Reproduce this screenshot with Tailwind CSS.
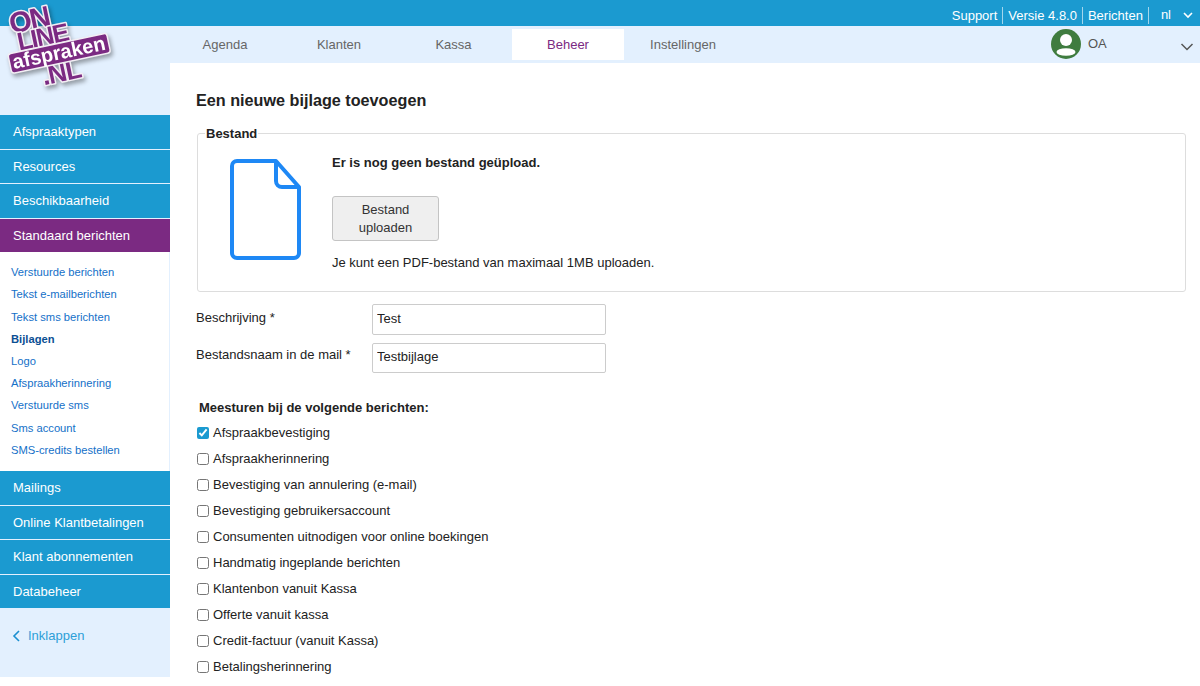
<!DOCTYPE html>
<html lang="en">
<head>
  <meta charset="UTF-8" />
  <title>Een nieuwe bijlage toevoegen</title>
  <script src="https://cdn.jsdelivr.net/npm/@tailwindcss/browser@4"></script>
</head>
<body class="bg-white font-['Liberation_Sans',Arial,sans-serif] text-[13px] text-[#222]">
  <div class="h-[677px] w-[1200px] overflow-hidden relative flex flex-col">
    <!-- top bar -->
    <div class="h-[26px] pt-[4px] bg-[#1b9ad0] flex items-center justify-end text-white text-[13px] shrink-0">
      <a class="pr-[5px] border-r border-white/60 leading-[17px]">Support</a>
      <a class="px-[5px] border-r border-white/60 leading-[17px]">Versie 4.8.0</a>
      <a class="px-[5px] border-r border-white/60 leading-[17px]">Berichten</a>
      <a class="pl-[12px] pr-[11px]">nl</a>
      <svg class="w-[12px] h-[12px] mr-[6px]" viewBox="0 0 12 12" fill="none" stroke="white" stroke-width="1.6"><path d="M2 4l4 4 4-4"/></svg>
    </div>

    <div class="flex flex-1 min-h-0">
      <!-- sidebar -->
      <div class="w-[170px] bg-[#e3f0fe] shrink-0 pt-[89px] flex flex-col">
        <div class="flex flex-col gap-px text-white text-[13px]">
          <a class="h-[34px] bg-[#1b9ad0] pl-[13px] flex items-center">Afspraaktypen</a>
          <a class="h-[33px] bg-[#1b9ad0] pl-[13px] flex items-center">Resources</a>
          <a class="h-[34px] bg-[#1b9ad0] pl-[13px] flex items-center">Beschikbaarheid</a>
          <a class="h-[33px] bg-[#7b2a82] pl-[13px] flex items-center">Standaard berichten</a>
        </div>
        <div class="bg-white pt-[9.500px] pb-[9.700px] pl-[11px] text-[11.2px] text-[#1470c8] flex flex-col border-r border-[#e3f0fe]">
          <a class="h-[22.2px] flex items-center">Verstuurde berichten</a>
          <a class="h-[22.2px] flex items-center">Tekst e-mailberichten</a>
          <a class="h-[22.2px] flex items-center">Tekst sms berichten</a>
          <a class="h-[22.2px] flex items-center font-bold text-[#0b4f94]">Bijlagen</a>
          <a class="h-[22.2px] flex items-center">Logo</a>
          <a class="h-[22.2px] flex items-center">Afspraakherinnering</a>
          <a class="h-[22.2px] flex items-center">Verstuurde sms</a>
          <a class="h-[22.2px] flex items-center">Sms account</a>
          <a class="h-[22.2px] flex items-center">SMS-credits bestellen</a>
        </div>
        <div class="flex flex-col gap-px text-white text-[13px]">
          <a class="h-[34px] bg-[#1b9ad0] pl-[13px] flex items-center">Mailings</a>
          <a class="h-[33px] bg-[#1b9ad0] pl-[13px] flex items-center">Online Klantbetalingen</a>
          <a class="h-[34px] bg-[#1b9ad0] pl-[13px] flex items-center">Klant abonnementen</a>
          <a class="h-[33px] bg-[#1b9ad0] pl-[13px] flex items-center">Databeheer</a>
        </div>
        <a class="mt-[18px] pl-[12px] flex items-center gap-[7px] text-[13px] text-[#2d9fd8]">
          <svg class="w-[9px] h-[12px]" viewBox="0 0 9 12" fill="none" stroke="#1b8fd0" stroke-width="1.6"><path d="M7 1L2 6l5 5"/></svg>
          Inklappen
        </a>
      </div>

      <!-- main -->
      <div class="flex-1 min-w-0 flex flex-col">
        <nav class="h-[37px] bg-[#e3f0fe] flex items-center text-[13px] text-[#666] shrink-0 relative">
          <a class="w-[114px] ml-[-2px] text-center">Agenda</a>
          <a class="w-[114px] text-center">Klanten</a>
          <a class="w-[115px] text-center">Kassa</a>
          <a class="w-[112px] h-[31px] mx-[1px] bg-white text-[#7b2a82] flex items-center justify-center">Beheer</a>
          <a class="w-[116px] text-center">Instellingen</a>
          <div class="absolute left-[881px] top-[3px] flex items-center gap-[7px]">
            <svg class="w-[30px] h-[30px]" viewBox="0 0 30 30"><circle cx="15" cy="15" r="15" fill="#3f7c3f"/><circle cx="15" cy="11" r="6" fill="#fff"/><ellipse cx="15" cy="23" rx="9.500" ry="3.800" fill="#fff"/></svg>
            <span class="text-[13px] text-[#555]">OA</span>
          </div>
          <svg class="absolute right-[6px] top-[16px] w-[14px] h-[10px]" viewBox="0 0 14 10" fill="none" stroke="#555" stroke-width="1.5"><path d="M1.5 2l5.5 5.5L12.500 2"/></svg>
        </nav>

        <div class="pl-[26px] pr-[14px] pt-[27px]">
          <h1 class="text-[16.2px] font-bold leading-[20px] text-[#222]">Een nieuwe bijlage toevoegen</h1>

          <fieldset class="mt-[16px] ml-[1px] border border-[#ddd] rounded-[3px] h-[166px] pl-[33px] flex">
            <legend class="ml-[-26px] px-[1px] text-[13px] font-bold leading-[15px] ">Bestand</legend>
            <div class="flex">
              <svg class="w-[71px] h-[101px] mt-[18px] ml-[-1px]" viewBox="0 0 71 101" fill="none" stroke="#1e88f5" stroke-width="4" stroke-linejoin="round"><path d="M7 2h39l23 26v66a5 5 0 0 1-5 5H7a5 5 0 0 1-5-5V7a5 5 0 0 1 5-5z"/><path d="M46 2v20a6 6 0 0 0 6 6h17"/></svg>
              <div class="ml-[31px] pt-[14px]">
                <p class="font-bold leading-[16px]">Er is nog geen bestand geüpload.</p>
                <button class="block mt-[25px] w-[107px] h-[45px] px-[12px] bg-[#efefef] border border-[#c4c4c4] rounded-[3px] text-[13px] leading-[18px] text-[#333]">Bestand uploaden</button>
                <p class="mt-[14px] leading-[16px]">Je kunt een PDF-bestand van maximaal 1MB uploaden.</p>
              </div>
            </div>
          </fieldset>

          <div class="mt-[12px] grid grid-cols-[176px_234px] gap-y-[8px] items-start">
            <label class="pt-[6px] leading-[16px]">Beschrijving *</label>
            <input class="h-[31px] border border-[#ccc] rounded-[2px] px-[4px] pb-[3px] text-[13px]" value="Test" />
            <label class="pt-[4px] leading-[16px]">Bestandsnaam in de mail *</label>
            <input class="h-[30px] border border-[#ccc] rounded-[2px] px-[4px] pb-[3px] text-[13px]" value="Testbijlage" />
          </div>

          <p class="mt-[27px] ml-[3px] font-bold leading-[16px]">Meesturen bij de volgende berichten:</p>
          <div class="mt-[4px] flex flex-col">
            <label class="h-[26px] flex items-center gap-[4px] pl-[1px]"><input type="checkbox" checked class="w-[12px] h-[12px] accent-[#1b9ad0]" />Afspraakbevestiging</label>
            <label class="h-[26px] flex items-center gap-[4px] pl-[1px]"><input type="checkbox" class="w-[12px] h-[12px]" />Afspraakherinnering</label>
            <label class="h-[26px] flex items-center gap-[4px] pl-[1px]"><input type="checkbox" class="w-[12px] h-[12px]" />Bevestiging van annulering (e-mail)</label>
            <label class="h-[26px] flex items-center gap-[4px] pl-[1px]"><input type="checkbox" class="w-[12px] h-[12px]" />Bevestiging gebruikersaccount</label>
            <label class="h-[26px] flex items-center gap-[4px] pl-[1px]"><input type="checkbox" class="w-[12px] h-[12px]" />Consumenten uitnodigen voor online boekingen</label>
            <label class="h-[26px] flex items-center gap-[4px] pl-[1px]"><input type="checkbox" class="w-[12px] h-[12px]" />Handmatig ingeplande berichten</label>
            <label class="h-[26px] flex items-center gap-[4px] pl-[1px]"><input type="checkbox" class="w-[12px] h-[12px]" />Klantenbon vanuit Kassa</label>
            <label class="h-[26px] flex items-center gap-[4px] pl-[1px]"><input type="checkbox" class="w-[12px] h-[12px]" />Offerte vanuit kassa</label>
            <label class="h-[26px] flex items-center gap-[4px] pl-[1px]"><input type="checkbox" class="w-[12px] h-[12px]" />Credit-factuur (vanuit Kassa)</label>
            <label class="h-[26px] flex items-center gap-[4px] pl-[1px]"><input type="checkbox" class="w-[12px] h-[12px]" />Betalingsherinnering</label>
          </div>
        </div>
      </div>
    </div>

    <!-- logo -->
    <svg class="absolute left-0 top-0 drop-shadow-[2px_3px_2px_rgba(0,0,0,0.35)]" width="120" height="90" viewBox="0 0 120 90" font-family="Liberation Sans, Arial, sans-serif" font-weight="bold">
      <g transform="rotate(-12 60 45)">
        <g fill="#7b2a82" stroke="#f3eef4" stroke-width="3" paint-order="stroke" stroke-linejoin="round">
          <text x="15" y="24" font-size="29" letter-spacing="-2">ON</text>
          <text x="19" y="42" font-size="25" letter-spacing="-1.500">LINE</text>
          <text x="36" y="81" font-size="26" letter-spacing="-1">.NL</text>
        </g>
        <rect x="7" y="43" width="101" height="20" rx="3" fill="#7b2a82" stroke="#f3eef4" stroke-width="1.500"/>
        <text x="10" y="59" font-size="20" fill="#fff">afspraken</text>
      </g>
    </svg>
  </div>
</body>
</html>
